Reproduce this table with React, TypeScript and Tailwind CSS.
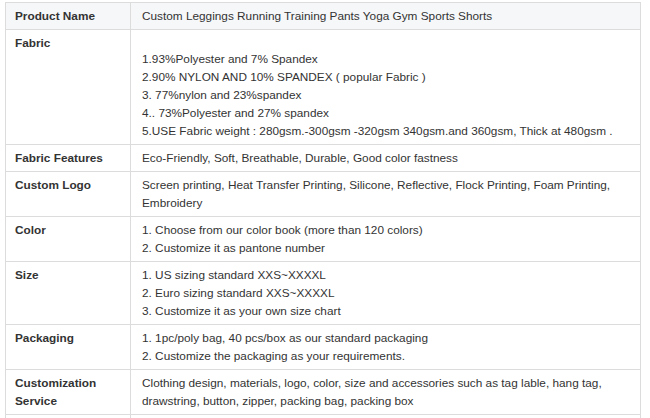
const rows: { label: string[]; value: string[] }[] = [
  { label: ["Product Name"], value: ["Custom Leggings Running Training Pants Yoga Gym Sports Shorts"] },
  {
    label: ["Fabric"],
    value: [
      "",
      "1.93%Polyester and 7% Spandex",
      "2.90% NYLON AND 10% SPANDEX ( popular Fabric )",
      "3. 77%nylon and 23%spandex",
      "4.. 73%Polyester and 27% spandex",
      "5.USE Fabric weight : 280gsm.-300gsm -320gsm 340gsm.and 360gsm, Thick at 480gsm .",
    ],
  },
  { label: ["Fabric Features"], value: ["Eco-Friendly, Soft, Breathable, Durable, Good color fastness"] },
  {
    label: ["Custom Logo"],
    value: [
      "Screen printing, Heat Transfer Printing, Silicone, Reflective, Flock Printing, Foam Printing,",
      "Embroidery",
    ],
  },
  {
    label: ["Color"],
    value: ["1. Choose from our color book (more than 120 colors)", "2. Customize it as pantone number"],
  },
  {
    label: ["Size"],
    value: [
      "1. US sizing standard XXS~XXXXL",
      "2. Euro sizing standard XXS~XXXXL",
      "3. Customize it as your own size chart",
    ],
  },
  {
    label: ["Packaging"],
    value: [
      "1. 1pc/poly bag, 40 pcs/box as our standard packaging",
      "2. Customize the packaging as your requirements.",
    ],
  },
  {
    label: ["Customization", "Service"],
    value: [
      "Clothing design, materials, logo, color, size and accessories such as tag lable, hang tag,",
      "drawstring, button, zipper, packing bag, packing box",
    ],
  },
  { label: [""], value: [""] },
];

export default function App() {
  return (
    <div className="h-[418px] w-[650px] overflow-hidden bg-white pt-[2px] pl-[5px] font-['Liberation_Sans',Arial,sans-serif] text-[11.8px] leading-[18px] text-[#333]">
      <table className="w-[636px] table-fixed border-collapse">
        <colgroup>
          <col className="w-[125px]" />
          <col />
        </colgroup>
        <tbody>
          {rows.map((row, i) => (
            <tr key={i} className={i === 0 ? "bg-[#f6f7f9]" : ""}>
              <td className="border border-[#dcdcdc] pt-[4px] pb-[4px] pl-[9px] align-top font-bold">
                {row.label.map((l, j) => (
                  <div key={j} className="h-[18px]">
                    {l}
                  </div>
                ))}
              </td>
              <td className="border border-[#dcdcdc] pt-[4px] pb-[4px] pl-[11px] align-top">
                {row.value.map((v, j) => (
                  <div key={j} className={v === "" && j === 0 && i === 1 ? "h-[16px]" : "h-[18px] whitespace-nowrap"}>
                    {v}
                  </div>
                ))}
              </td>
            </tr>
          ))}
        </tbody>
      </table>
    </div>
  );
}
